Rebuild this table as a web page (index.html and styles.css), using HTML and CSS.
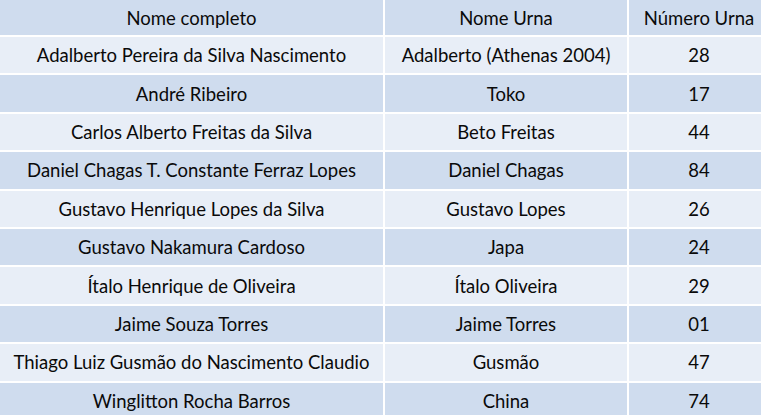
FILE: index.html
```html
<!DOCTYPE html>
<html lang="pt">
<head>
<meta charset="utf-8">
<link rel="stylesheet" href="styles.css">
</head>
<body>
<div class="table">
  <div class="cell dark">Nome completo</div><div class="cell dark">Nome Urna</div><div class="cell dark">Número Urna</div>
  <div class="cell light">Adalberto Pereira da Silva Nascimento</div><div class="cell light">Adalberto (Athenas 2004)</div><div class="cell light">28</div>
  <div class="cell dark">André Ribeiro</div><div class="cell dark">Toko</div><div class="cell dark">17</div>
  <div class="cell light">Carlos Alberto Freitas da Silva</div><div class="cell light">Beto Freitas</div><div class="cell light">44</div>
  <div class="cell dark">Daniel Chagas T. Constante Ferraz Lopes</div><div class="cell dark">Daniel Chagas</div><div class="cell dark">84</div>
  <div class="cell light">Gustavo Henrique Lopes da Silva</div><div class="cell light">Gustavo Lopes</div><div class="cell light">26</div>
  <div class="cell dark">Gustavo Nakamura Cardoso</div><div class="cell dark">Japa</div><div class="cell dark">24</div>
  <div class="cell light">Ítalo Henrique de Oliveira</div><div class="cell light">Ítalo Oliveira</div><div class="cell light">29</div>
  <div class="cell dark">Jaime Souza Torres</div><div class="cell dark">Jaime Torres</div><div class="cell dark">01</div>
  <div class="cell light">Thiago Luiz Gusmão do Nascimento Claudio</div><div class="cell light">Gusmão</div><div class="cell light">47</div>
  <div class="cell dark">Winglitton Rocha Barros</div><div class="cell dark">China</div><div class="cell dark">74</div>
</div>
</body>
</html>
```
FILE: styles.css
```css
html, body {
  margin: 0;
  padding: 0;
  background: #ffffff;
  overflow: hidden;
}
.table {
  display: grid;
  grid-template-columns: 383px 242px 140px;
  grid-template-rows: 35px repeat(10, 36.4px);
  column-gap: 2px;
  row-gap: 2px;
  width: 767px;
  font-family: Lato, "Open Sans", sans-serif;
  font-size: 18.5px;
  color: #0a0a0a;
}
.cell {
  display: flex;
  align-items: center;
  justify-content: center;
  white-space: nowrap;
}
.dark { background: #cfdcee; }
.light { background: #e8eef7; }
```
